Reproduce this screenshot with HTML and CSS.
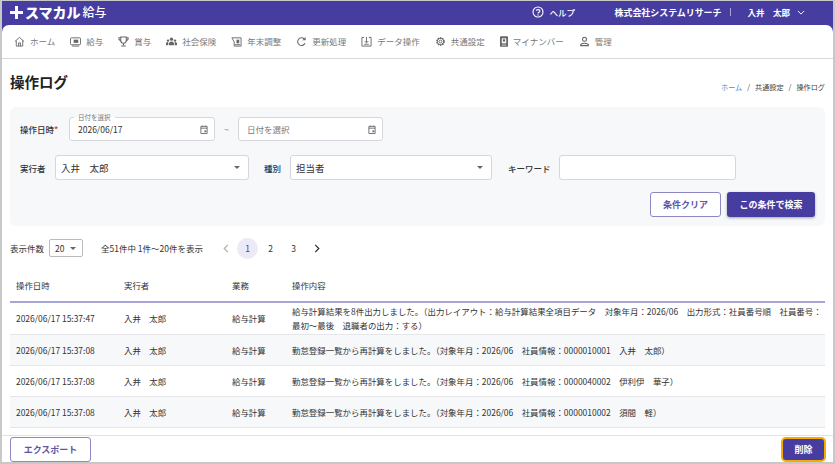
FILE: index.html
```html
<!doctype html>
<html lang="ja">
<head>
<meta charset="UTF-8">
<title>操作ログ</title>
<link rel="stylesheet" href="styles.css">
</head>
<body>
<div class="frame">
	<header class="top">
		<div class="logo">
			<svg class="logo-plus" viewBox="0 0 13 13"><path d="M5 0h3v5h5v3H8v5H5V8H0V5h5z" fill="#fff"/></svg>
			<span class="logo-main">スマカル</span><span class="logo-sub">給与</span>
		</div>
		<div class="top-right">
			<svg class="ic-help" viewBox="0 0 12 12"><circle cx="6" cy="6" r="5" fill="none" stroke="#fff" stroke-width="1.1"/><path d="M4.2 4.8C4.3 3.2 7.9 3.1 7.9 4.9 7.9 6.2 6 6.200 6 7.500" fill="none" stroke="#fff" stroke-width="1.1"/><circle cx="6" cy="9" r=".7" fill="#fff"/></svg>
			<span class="help">ヘルプ</span>
			<span class="company">株式会社システムリサーチ</span>
			<span class="sep"></span>
			<span class="user">入井　太郎</span>
			<svg class="ic-down" viewBox="0 0 10 6"><path d="M1 1l4 4 4-4" fill="none" stroke="#fff" stroke-width="1.2"/></svg>
		</div>
	</header>
	<div class="sheet">
		<nav class="nav">
			<a><svg class="ni" viewBox="0 0 12 12"><path d="M1 6l5-4.500L11 6M2.500 5v6h7V5M5 11V7.500h2V11" fill="none" stroke="#666" stroke-width="1"/></svg>ホーム</a>
			<a><svg class="ni" viewBox="0 0 12 12"><rect x=".5" y="2" width="11" height="7.500" rx="1" fill="none" stroke="#666"/><rect x="4" y="4" width="5" height="3.500" fill="#666"/><path d="M2 11h8" stroke="#666"/></svg>給与</a>
			<a><svg class="ni" viewBox="0 0 12 12"><path d="M3 1h6v4a3 3 0 0 1-6 0zM3 2H1v1.500L3 5.500M9 2h2v1.500L9 5.500M6 8v2M3.500 11h5" fill="none" stroke="#666" stroke-width="1.100"/></svg>賞与</a>
			<a><svg class="ni" viewBox="0 0 12 12"><circle cx="6" cy="3.500" r="1.800" fill="#666"/><circle cx="2.200" cy="5" r="1.300" fill="#666"/><circle cx="9.800" cy="5" r="1.300" fill="#666"/><path d="M3.300 10V7.500Q6 4.500 8.700 7.500V10zM0 10V8q1-2 2.500-1.200V10zM12 10V8q-1-2-2.500-1.200V10z" fill="#666"/></svg>社会保険</a>
			<a><svg class="ni" viewBox="0 0 12 12"><path d="M1 2h10v9H3.500V6.500L1 2z" fill="none" stroke="#666"/><rect x="6" y="4" width="3" height="4" fill="#666"/><path d="M4 9.500h6" stroke="#666"/></svg>年末調整</a>
			<a><svg class="ni" viewBox="0 0 12 12"><path d="M9.800 8A4.200 4.200 0 1 1 9 3.200" fill="none" stroke="#666" stroke-width="1.200"/><path d="M10.500 1v3.500H7z" fill="#666"/></svg>更新処理</a>
			<a><svg class="ni" viewBox="0 0 12 12"><path d="M3.500 1.500H1v9.500h10V1.500H8.500M6 1v6M4 5.500L6 7.500 8 5.500M3.500 9h5" fill="none" stroke="#666" stroke-width="1"/></svg>データ操作</a>
			<a><svg class="ni" viewBox="0 0 12 12"><circle cx="6" cy="6" r="3.800" fill="none" stroke="#666" stroke-width="1.800" stroke-dasharray="1.500 .9"/><circle cx="6" cy="6" r="3.600" fill="none" stroke="#666" stroke-width=".9"/><circle cx="6" cy="6" r="1.500" fill="none" stroke="#666" stroke-width="1"/></svg>共通設定</a>
			<a><svg class="ni ni-num" viewBox="0 0 9 12"><rect width="9" height="12" rx="1" fill="#666"/><rect x="2" y="2.500" width="5" height="5.500" fill="#fff"/><rect x="3.200" y="3.500" width="2.600" height="2.600" fill="#666"/><path d="M2 10h5" stroke="#fff" stroke-width=".8"/></svg>マイナンバー</a>
			<a><svg class="ni" viewBox="0 0 12 12"><circle cx="6" cy="3.500" r="2.200" fill="none" stroke="#666" stroke-width="1.100"/><path d="M1.800 10.500V9.300Q6 6.300 10.200 9.300v1.200z" fill="none" stroke="#666" stroke-width="1.100"/></svg>管理</a>
		</nav>

		<main class="main">
			<div class="title-row">
				<h1>操作ログ</h1>
				<div class="crumb"><a>ホーム</a><i>/</i>共通設定<i>/</i>操作ログ</div>
			</div>

			<section class="search">
				<div class="row row-date">
					<label class="lb">操作日時<b>*</b></label>
					<div class="field f-date">
						<span class="legend">日付を選択</span>
						<span>2026/06/17</span>
						<svg class="ic-cal" viewBox="0 0 9 10"><path d="M1 1.500h7v8H1zM1 3.500h7M2.500 .5v1M6.500 .5v1" fill="none" stroke="#666"/><rect x="5" y="6" width="2" height="2" fill="#666"/></svg>
					</div>
					<span class="tilde">~</span>
					<div class="field f-date ph">
						<span>日付を選択</span>
						<svg class="ic-cal" viewBox="0 0 9 10"><path d="M1 1.500h7v8H1zM1 3.500h7M2.500 .5v1M6.500 .5v1" fill="none" stroke="#666"/><rect x="5" y="6" width="2" height="2" fill="#666"/></svg>
					</div>
				</div>
				<div class="row row-cond">
					<label class="lb">実行者</label>
					<div class="field sel f-user"><span>入井　太郎</span><em class="caret"></em></div>
					<label class="lb lb-kind">種別</label>
					<div class="field sel f-kind"><span>担当者</span><em class="caret"></em></div>
					<label class="lb lb-key">キーワード</label>
					<div class="field f-key"></div>
				</div>
				<div class="row row-btn">
					<button class="btn btn-line">条件クリア</button>
					<button class="btn btn-main">この条件で検索</button>
				</div>
			</section>

			<div class="pager">
				<span class="count-lb">表示件数</span>
				<div class="count-sel"><span>20</span><em class="caret"></em></div>
				<span class="total">全51件中 1件～20件を表示</span>
				<div class="pages">
					<svg class="chev" viewBox="0 0 6 10"><path d="M5 1L1 5l4 4" fill="none" stroke="#aaa" stroke-width="1.200"/></svg>
					<span class="pg on">1</span>
					<span class="pg">2</span>
					<span class="pg">3</span>
					<svg class="chev" viewBox="0 0 6 10"><path d="M1 1l4 4-4 4" fill="none" stroke="#333" stroke-width="1.400"/></svg>
				</div>
			</div>

			<div class="tbl">
				<div class="tr th"><div>操作日時</div><div>実行者</div><div>業務</div><div>操作内容</div></div>
				<div class="tr tr-first"><div>2026/06/17 15:37:47</div><div>入井　太郎</div><div>給与計算</div><div>給与計算結果を8件出力しました。（出力レイアウト：給与計算結果全項目データ　対象年月：2026/06　出力形式：社員番号順　社員番号：最初～最後　退職者の出力：する）</div></div>
				<div class="tr odd"><div>2026/06/17 15:37:08</div><div>入井　太郎</div><div>給与計算</div><div>勤怠登録一覧から再計算をしました。（対象年月：2026/06　社員情報：0000010001　入井　太郎）</div></div>
				<div class="tr"><div>2026/06/17 15:37:08</div><div>入井　太郎</div><div>給与計算</div><div>勤怠登録一覧から再計算をしました。（対象年月：2026/06　社員情報：0000040002　伊利伊　華子）</div></div>
				<div class="tr odd"><div>2026/06/17 15:37:08</div><div>入井　太郎</div><div>給与計算</div><div>勤怠登録一覧から再計算をしました。（対象年月：2026/06　社員情報：0000010002　須間　軽）</div></div>
			</div>
		</main>

		<footer class="foot">
			<button class="btn btn-line btn-export">エクスポート</button>
			<button class="btn btn-main btn-del">削除</button>
		</footer>
	</div>
</div>
</body>
</html>
```

FILE: styles.css
```css
*{ margin:0; padding:0; box-sizing:border-box; }
html,body{ height:100%; overflow:hidden; }
body{ font-family:"Noto Sans CJK JP","Noto Sans",sans-serif; font-size:8.5px; color:#333; background:#fff; }
button{ font-family:inherit; }

.frame{
	display:flex;
	flex-direction:column;
	width:835px;
	height:464px;
	border:solid #c8c8c8;
	border-width:1px 2px 2px 2px;
	background:#473da0;
}

/* header */
.top{
	display:flex;
	justify-content:space-between;
	align-items:center;
	height:24px;
	flex:none;
	padding:0 28px 2px 8px;
	color:#fff;
}
.logo{ display:flex; align-items:center; }
.logo-plus{ width:13px; height:13px; margin-right:2px; }
.logo-main{ font-size:14px; font-weight:900; line-height:20px; }
.logo-sub{ font-size:12px; font-weight:500; line-height:20px; margin-left:2px; }
.top-right{ display:flex; align-items:center; font-weight:500; }
.ic-help{ width:12px; height:12px; margin-right:6px; }
.help{ width:65px; }
.company{ font-weight:700; font-size:8.95px; }
.sep{ width:1px; height:8px; background:#a7a2d4; margin:0 16px 0 9px; }
.user{ font-weight:700; }
.ic-down{ width:8px; height:5px; margin-left:7px; }

.sheet{
	display:flex;
	flex-direction:column;
	flex:1;
	min-height:0;
	background:#fff;
	border-radius:7px 7px 0 0;
}

/* nav */
.nav{
	display:flex;
	align-items:center;
	height:34px;
	flex:none;
	padding:0 0 1px 12px;
	border-bottom:1px solid #d9d9d9;
	color:#777;
	white-space:nowrap;
}
.nav a{ display:flex; align-items:center; margin-right:15px; }
.ni{ width:11px; height:11px; margin-right:5px; }
.ni-num{ width:8px; }

/* main */
.main{ flex:1; min-height:0; padding:0 8px; overflow:hidden; }
.title-row{ display:flex; justify-content:space-between; align-items:center; height:48px; }
h1{ font-size:14.5px; font-weight:700; color:#222; padding-bottom:4px; }
.crumb{ font-size:7.15px; color:#444; padding-top:7px; }
.crumb a{ color:#3f8fd2; }
.crumb i{ font-style:normal; margin:0 5px; }

.search{
	height:119px;
	padding:10px 10px 0;
	background:#f7f8fa;
	border-radius:6px;
}
.row{ display:flex; align-items:center; }
.lb{ font-weight:500; color:#333; white-space:nowrap; }
.lb b{ color:#e53935; }
.row-date .lb{ width:49px; }
.row-cond{ margin-top:14px; }
.row-cond .lb:first-child{ width:35px; }
.field{
	position:relative;
	display:flex;
	align-items:center;
	justify-content:space-between;
	height:25px;
	padding:0 8px 0 5px;
	background:#fff;
	border:1px solid #d6d6dc;
	border-radius:3px;
	font-size:9.5px;
}
.f-date{ width:146px; height:24px; padding:0 6px 0 8px; font-size:8.5px; }
.ph{ width:145px; color:#777; }
.legend{
	position:absolute;
	top:-5px;
	left:4px;
	padding:0 4px;
	font-size:6.5px;
	line-height:9px;
	color:#777;
	background:linear-gradient(#f7f8fa 50%,#fff 50%);
}
.ic-cal{ width:8px; height:9px; }
.tilde{ width:23px; text-align:center; color:#777; }
.caret{ width:0; height:0; border:solid transparent; border-width:3px 3px 0; border-top-color:#666; }
.f-user{ width:194px; }
.lb-kind{ margin-left:15px; width:26px; }
.f-kind{ width:202px; }
.lb-key{ margin-left:16px; width:51px; }
.f-key{ width:177px; }
.row-btn{ justify-content:flex-end; margin-top:12px; gap:6px; }
.btn{ height:25px; border-radius:3px; font-size:9px; font-weight:700; }
.btn-line{ width:71px; background:#fff; color:#5d55a8; border:1px solid #8d88c4; }
.btn-main{ width:88px; background:#473da0; color:#fff; border:0; box-shadow:0 1px 3px rgba(0,0,0,.35); }

/* pager */
.pager{ display:flex; align-items:center; height:44px; white-space:nowrap; }
.count-lb{ width:39px; }
.count-sel{
	display:flex;
	align-items:center;
	justify-content:space-between;
	width:34px;
	height:18px;
	margin:0 18px 0 0;
	padding:0 6px 0 5px;
	border:1px solid #bbb;
	border-radius:2px;
}
.pages{ display:flex; align-items:center; margin-left:20px; }
.chev{ width:6px; height:9px; }
.pg{ width:21px; height:21px; margin-left:2px; line-height:21px; text-align:center; border-radius:50%; }
.pages .pg:nth-child(2){ margin-left:8px; }
.pages .chev:last-child{ margin-left:10px; }
.pg.on{ background:#eceaf6; color:#473da0; }

/* table */
.tr{
	display:grid;
	grid-template-columns:108px 108px 60px 1fr;
	align-items:center;
	height:31px;
	padding:0 0 1px 6px;
	border-bottom:1px solid #e6e6ea;
	font-size:8.45px;
	line-height:14px;
}
.th{ height:33px; border-bottom:2px solid #a9a4d8; }
.tr-first{ height:32px; }
.odd{ background:#f7f8fa; }

/* footer */
.foot{
	display:flex;
	justify-content:space-between;
	align-items:center;
	flex:none;
	height:27px;
	padding:0 7px 0 8px;
	background:#fff;
	border-top:1px solid #e3e3e3;
}
.btn-export{ width:81px; }
.btn-del{ width:45px; border:2px solid #f5ab00; border-radius:5px; box-shadow:none; }
```
